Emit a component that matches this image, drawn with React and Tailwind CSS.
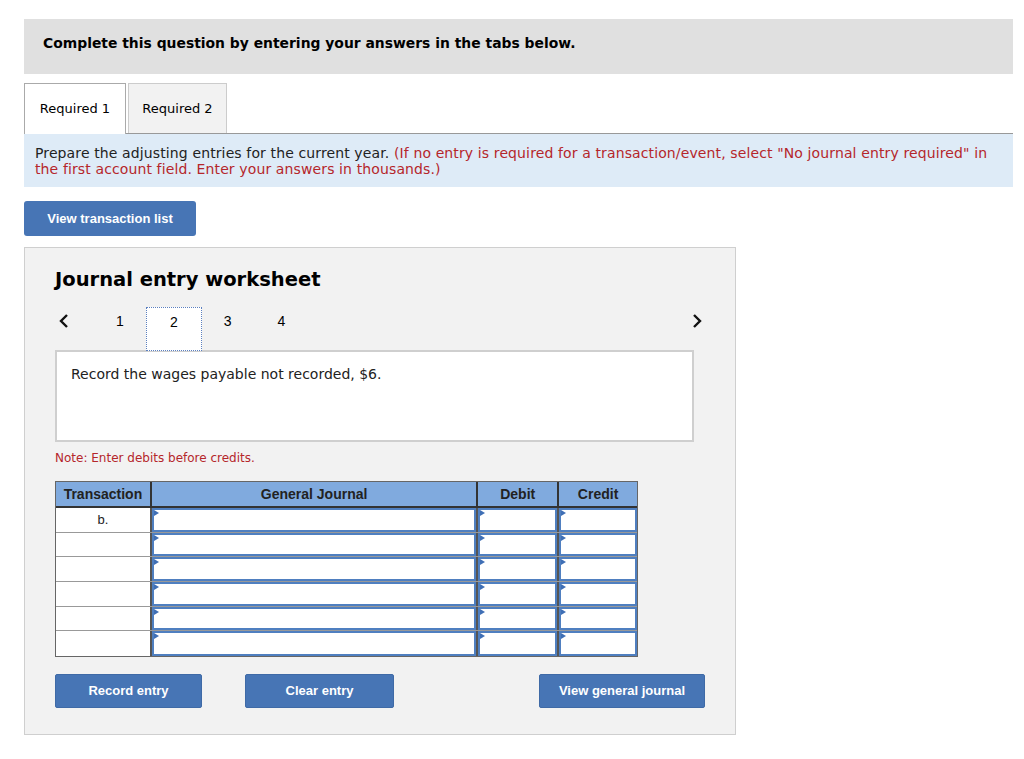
import React from "react";

const V = { fontFamily: '"DejaVu Sans", Verdana, sans-serif' };
const A = { fontFamily: '"Liberation Sans", Arial, sans-serif' };

function InputCell({ w }) {
  return (
    <div className={`${w} h-full border-l-2 border-[#555]`}>
      <div className="relative h-full w-full bg-white border-2 border-[#4f7fc0]">
        <div className="absolute left-0 top-0 w-0 h-0 border-t-[3px] border-b-[3px] border-l-[5px] border-t-transparent border-b-transparent border-l-[#3f6fb5]" />
      </div>
    </div>
  );
}

function Row({ label, last }) {
  return (
    <div className={`flex h-[24.67px] ${last ? "" : "border-b border-[#999]"}`}>
      <div className="w-[94px] h-full bg-white flex items-center justify-center text-[13px] text-[#222]" style={A}>
        {label}
      </div>
      <InputCell w="w-[327px]" />
      <InputCell w="w-[81px]" />
      <InputCell w="w-[80px]" />
    </div>
  );
}

function Btn({ children, w }) {
  return (
    <button
      className={`${w} h-[34px] bg-[#4775b5] text-white font-bold text-[13px] rounded-[2px] border border-[#3f6aa6]`}
      style={A}
    >
      {children}
    </button>
  );
}

export default function App() {
  return (
    <div className="w-[1024px] h-[759px] bg-white overflow-hidden" style={V}>
      <div className="pl-[24px] pr-[11px] pt-[19px]">
        <div className="h-[55px] bg-[#e0e0e0] pl-[19px] pt-[14px] text-[13.9px] font-bold text-black">
          Complete this question by entering your answers in the tabs below.
        </div>
        <div className="mt-[9px] flex items-end h-[51px] border-b border-[#999]">
          <div className="w-[102px] h-[51px] bg-white border border-[#aaa] border-b-0 flex items-center justify-center text-[13px] text-black -mb-[1px] relative z-10">
            Required 1
          </div>
          <div className="ml-[2px] w-[99px] h-[50px] bg-[#f2f2f2] border border-[#ccc] border-b-0 flex items-center justify-center text-[13px] text-black">
            Required 2
          </div>
        </div>
        <div className="h-[53px] bg-[#deebf7] px-[11px] pt-[11px] text-[14px] leading-[16px] tracking-[0.12px] text-[#222]">
          Prepare the adjusting entries for the current year.{" "}
          <span className="text-[#b5262b]">
            (If no entry is required for a transaction/event, select "No journal entry required" in the first account field. Enter your answers in thousands.)
          </span>
        </div>
        <div className="mt-[14px]">
          <button
            className="w-[172px] h-[35px] bg-[#4775b5] text-white font-bold text-[13px] rounded-[3px]"
            style={A}
          >
            View transaction list
          </button>
        </div>
        <div className="mt-[11px] w-[712px] h-[488px] bg-[#f2f2f2] border border-[#cfcfcf] pl-[30px]">
          <div className="pt-[19px] text-[19.5px] font-bold text-black leading-[26px]">Journal entry worksheet</div>
          <div className="mt-[14px] flex items-start h-[44px] relative" style={A}>
            <svg width="14" height="16" viewBox="0 0 14 16" className="ml-[2px] mt-[6px]">
              <path d="M10 2 L4 8 L10 14" fill="none" stroke="#111" strokeWidth="2.4" />
            </svg>
            <span className="ml-[45px] mt-[6px] text-[14px] leading-[16px] text-black">1</span>
            <div className="ml-[22px] w-[56px] h-[44px] bg-white border border-dotted border-[#5b7fbf] flex justify-center pt-[6px] text-[14px] leading-[16px] text-black relative z-10">
              2
            </div>
            <span className="ml-[22px] mt-[6px] text-[14px] leading-[16px] text-black">3</span>
            <span className="ml-[46px] mt-[6px] text-[14px] leading-[16px] text-black">4</span>
            <svg width="14" height="16" viewBox="0 0 14 16" className="ml-[405px] mt-[6px]">
              <path d="M4 2 L10 8 L4 14" fill="none" stroke="#111" strokeWidth="2.4" />
            </svg>
          </div>
          <div className="-mt-[1px] w-[639px] h-[92px] bg-white border-2 border-[#cfcfcf] px-[14px] pt-[12px] text-[14px] text-[#222]">
            Record the wages payable not recorded, $6.
          </div>
          <div className="mt-[7px] text-[12px] text-[#b5262b]">Note: Enter debits before credits.</div>
          <div className="mt-[14px] w-[583px] border border-[#666]" style={A}>
            <div className="flex h-[26px] bg-[#80aade] border-b-2 border-[#333] text-[14px] font-bold text-[#222]">
              <div className="w-[94px] flex items-center justify-center">Transaction</div>
              <div className="w-[327px] flex items-center justify-center border-l-2 border-[#333]">General Journal</div>
              <div className="w-[81px] flex items-center justify-center border-l-2 border-[#333]">Debit</div>
              <div className="w-[80px] flex items-center justify-center border-l-2 border-[#333]">Credit</div>
            </div>
            <Row label="b." />
            <Row label="" />
            <Row label="" />
            <Row label="" />
            <Row label="" />
            <Row label="" last />
          </div>
          <div className="mt-[17px] flex">
            <Btn w="w-[147px]">Record entry</Btn>
            <div className="ml-[43px]">
              <Btn w="w-[149px]">Clear entry</Btn>
            </div>
            <div className="ml-[145px]">
              <Btn w="w-[166px]">View general journal</Btn>
            </div>
          </div>
        </div>
      </div>
    </div>
  );
}
